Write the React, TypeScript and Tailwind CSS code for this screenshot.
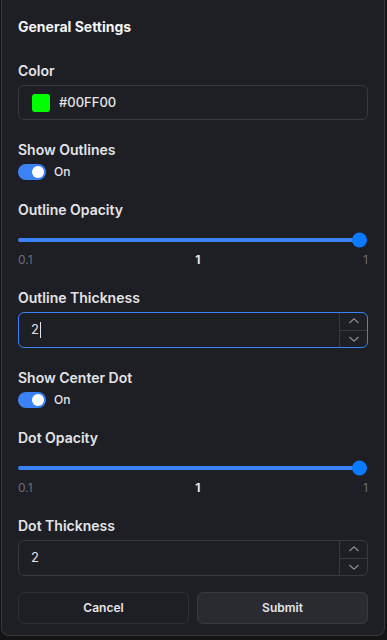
import React from "react";

const font = { fontFamily: "Inter, 'Noto Sans', sans-serif" };

function Label({ children }: { children: React.ReactNode }) {
  return <div className="text-[14px] leading-[20px] font-semibold text-[#e4e4e7]">{children}</div>;
}

function Toggle() {
  return (
    <div className="mt-1 flex items-center gap-2 h-4">
      <div className="w-[28px] h-[16px] rounded-full bg-[#3b82f6] flex items-center justify-end pr-[2px]">
        <div className="w-[12px] h-[12px] rounded-full bg-white" />
      </div>
      <span className="text-[12px] leading-4 text-[#e4e4e7] font-medium">On</span>
    </div>
  );
}

function Slider() {
  return (
    <div>
      <div className="mt-4 h-2 relative flex items-center">
        <div className="h-[4px] flex-1 mr-[8px] rounded-full bg-[#3b82f6]" />
        <div className="absolute right-[1px] top-1/2 -translate-y-1/2 w-[15px] h-[15px] rounded-full bg-[#0a7aff]" />
      </div>
      <div className="mt-2 flex justify-between text-[12px] leading-4 text-[#6b6d75]">
        <span>0.1</span>
        <span className="font-bold text-[#e4e4e7]">1</span>
        <span>1</span>
      </div>
    </div>
  );
}

function NumberInput({ focused }: { focused?: boolean }) {
  return (
    <div
      className={
        "mt-1 h-[36px] flex rounded-md border " +
        (focused ? "border-[#3b82f6]" : "border-[#38393e]")
      }
    >
      <div className="flex-1 flex items-center pl-3 text-[13px] text-[#e4e4e7]">
        2{focused && <span className="inline-block w-px h-[16px] bg-[#e4e4e7] ml-[1px]" />}
      </div>
      <div className="w-[28px] flex flex-col border-l border-[#38393e]">
        <div className="flex-1 flex items-center justify-center border-b border-[#38393e]">
          <svg width="12" height="8" viewBox="0 0 12 8" fill="none">
            <path d="M1.5 6L6 1.8L10.5 6" stroke="#8a8b90" strokeWidth="1.3" />
          </svg>
        </div>
        <div className="flex-1 flex items-center justify-center">
          <svg width="12" height="8" viewBox="0 0 12 8" fill="none">
            <path d="M1.5 2L6 6.2L10.5 2" stroke="#8a8b90" strokeWidth="1.3" />
          </svg>
        </div>
      </div>
    </div>
  );
}

export default function App() {
  return (
    <div className="w-[387px] h-[640px] bg-[#141416] overflow-hidden" style={font}>
      <div className="ml-px w-[384px] h-[636px] bg-[#1e1f24] border border-t-0 border-[#36373c] rounded-b-lg px-4 pt-[17px]">
        <div className="text-[14px] leading-[20px] font-bold text-[#f4f4f5]">General Settings</div>
        <div className="mt-6 flex flex-col gap-5">
          <div>
            <Label>Color</Label>
            <div className="mt-1 h-[35px] rounded-md border border-[#38393e] flex items-center pl-[13px] gap-[9px]">
              <div className="w-[18px] h-[18px] rounded-[3px] bg-[#00ff00]" />
              <span className="text-[13px] font-medium text-[#e4e4e7]">#00FF00</span>
            </div>
          </div>
          <div>
            <Label>Show Outlines</Label>
            <Toggle />
          </div>
          <div>
            <Label>Outline Opacity</Label>
            <Slider />
          </div>
          <div>
            <Label>Outline Thickness</Label>
            <NumberInput focused />
          </div>
          <div>
            <Label>Show Center Dot</Label>
            <Toggle />
          </div>
          <div>
            <Label>Dot Opacity</Label>
            <Slider />
          </div>
          <div>
            <Label>Dot Thickness</Label>
            <NumberInput />
          </div>
        </div>
        <div className="mt-4 flex gap-2">
          <button className="flex-1 h-[32px] rounded-md border border-[#2e2f34] text-[12px] font-semibold text-[#e4e4e7]">
            Cancel
          </button>
          <button className="flex-1 h-[32px] rounded-md border border-[#38393e] bg-[#2a2b30] text-[12px] font-semibold text-[#e4e4e7]">
            Submit
          </button>
        </div>
      </div>
    </div>
  );
}
